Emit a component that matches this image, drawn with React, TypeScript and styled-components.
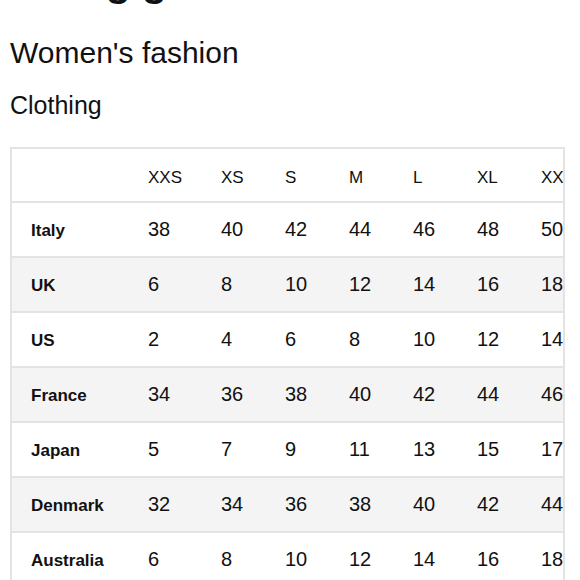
import React from "react";
import styled, { createGlobalStyle } from "styled-components";

const GlobalStyle = createGlobalStyle`
  html, body {
    margin: 0;
    padding: 0;
    background: #ffffff;
    overflow: hidden;
  }
  body {
    font-family: "Liberation Sans", Arial, sans-serif;
    color: #111111;
  }
`;

const Page = styled.div`
  padding: 0 0 0 10px;
  width: 580px;
  box-sizing: border-box;
`;

const PageTitle = styled.h1`
  margin: -42px 0 0;
  font-size: 41px;
  line-height: 48px;
  font-weight: 700;
`;

const SectionTitle = styled.h2`
  margin: 29px 0 0;
  font-size: 30px;
  line-height: 36px;
  font-weight: 400;
`;

const SubTitle = styled.h3`
  margin: 19px 0 0;
  font-size: 25px;
  line-height: 30px;
  font-weight: 400;
`;

const TableFrame = styled.div`
  margin-top: 27px;
  width: 555px;
  box-sizing: border-box;
  border: 2px solid #e3e3e3;
  overflow: hidden;
`;

const Table = styled.div`
  width: max-content;
`;

const Row = styled.div<{ $shaded?: boolean; $header?: boolean }>`
  display: grid;
  grid-template-columns: 116px 73px repeat(6, 64px);
  height: ${(p) => (p.$header ? "52px" : "53px")};
  background: ${(p) => (p.$shaded ? "#f4f4f4" : "#ffffff")};
  border-bottom: 2px solid #e3e3e3;
`;

const Cell = styled.div<{ $first?: boolean }>`
  display: flex;
  align-items: center;
  padding-left: ${(p) => (p.$first ? "19px" : "20px")};
  white-space: nowrap;
`;

const HeadCell = styled(Cell)`
  font-size: 17px;
  padding-top: 5px;
`;

const Country = styled(Cell)`
  font-size: 17px;
  font-weight: 700;
  padding-top: 3px;
`;

const Value = styled(Cell)`
  font-size: 20px;
`;

const sizes = ["XXS", "XS", "S", "M", "L", "XL", "XXL"];

const rows: [string, number[]][] = [
  ["Italy", [38, 40, 42, 44, 46, 48, 50]],
  ["UK", [6, 8, 10, 12, 14, 16, 18]],
  ["US", [2, 4, 6, 8, 10, 12, 14]],
  ["France", [34, 36, 38, 40, 42, 44, 46]],
  ["Japan", [5, 7, 9, 11, 13, 15, 17]],
  ["Denmark", [32, 34, 36, 38, 40, 42, 44]],
  ["Australia", [6, 8, 10, 12, 14, 16, 18]],
];

export default function App() {
  return (
    <>
      <GlobalStyle />
      <Page>
        <PageTitle>Sizing guide</PageTitle>
        <SectionTitle>Women's fashion</SectionTitle>
        <SubTitle>Clothing</SubTitle>
        <TableFrame>
          <Table>
            <Row $header>
              <HeadCell $first />
              {sizes.map((s) => (
                <HeadCell key={s}>{s}</HeadCell>
              ))}
            </Row>
            {rows.map(([name, vals], i) => (
              <Row key={name} $shaded={i % 2 === 1}>
                <Country $first>{name}</Country>
                {vals.map((v, j) => (
                  <Value key={j}>{v}</Value>
                ))}
              </Row>
            ))}
          </Table>
        </TableFrame>
      </Page>
    </>
  );
}
